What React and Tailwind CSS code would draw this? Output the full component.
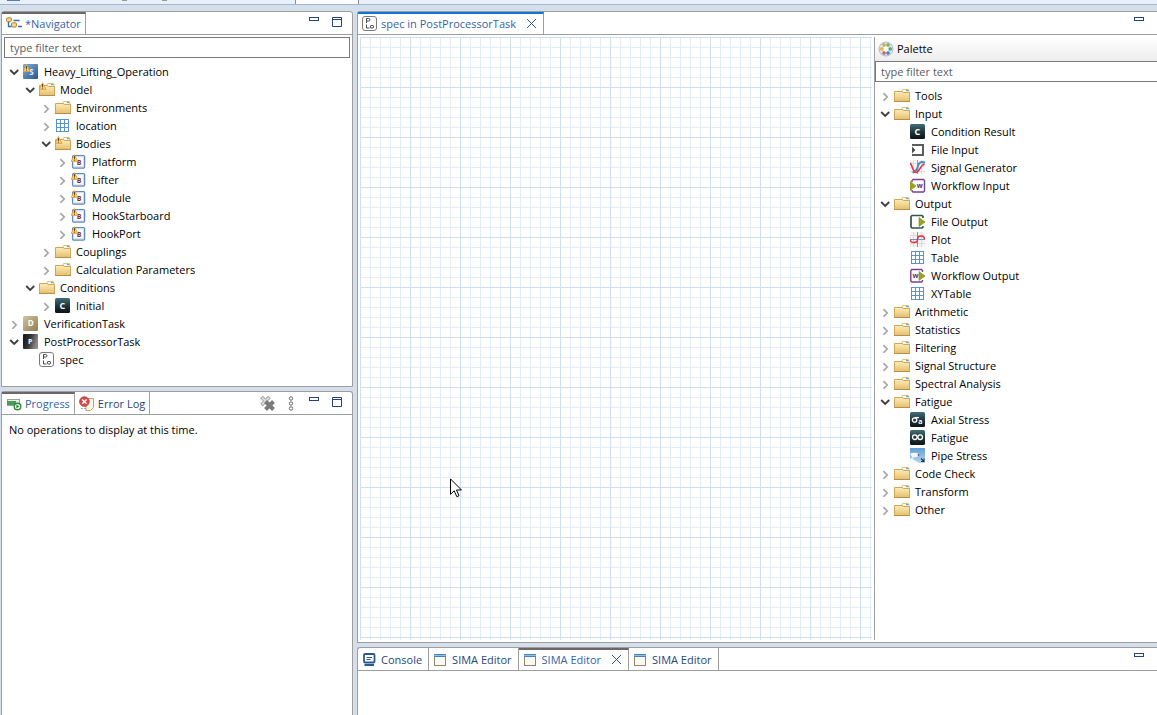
import React from "react";

const Svg = ({ children, w = 16, h = 16, className = "" }) => (
  <svg width={w} height={h} viewBox={`0 0 ${w} ${h}`} className={`shrink-0 ${className}`} aria-hidden="true">
    {children}
  </svg>
);

const Defs = () => (
  <svg width="0" height="0" className="absolute" aria-hidden="true">
    <defs>
      <linearGradient id="folder" x1="0" y1="0" x2="0" y2="1">
        <stop offset="0" stopColor="#fdeeba" />
        <stop offset="1" stopColor="#e6be6c" />
      </linearGradient>
      <linearGradient id="teal" x1="0" y1="0" x2="0" y2="1">
        <stop offset="0" stopColor="#3f7077" />
        <stop offset="0.6" stopColor="#1c2f33" />
        <stop offset="1" stopColor="#0d1414" />
      </linearGradient>
      <linearGradient id="blue" x1="0" y1="0" x2="1" y2="1">
        <stop offset="0" stopColor="#7fb0dc" />
        <stop offset="1" stopColor="#2a5590" />
      </linearGradient>
      <linearGradient id="tan" x1="0" y1="0" x2="1" y2="1">
        <stop offset="0" stopColor="#d3c69d" />
        <stop offset="1" stopColor="#8d7c50" />
      </linearGradient>
      <linearGradient id="dark" x1="0" y1="0" x2="1" y2="0.3">
        <stop offset="0" stopColor="#151515" />
        <stop offset="0.5" stopColor="#333" />
        <stop offset="1" stopColor="#8a8a8a" />
      </linearGradient>
      <linearGradient id="pipe" x1="0" y1="0" x2="0" y2="1">
        <stop offset="0" stopColor="#5f9fd6" />
        <stop offset="1" stopColor="#b8d6ee" />
      </linearGradient>
    </defs>
  </svg>
);

const Warn = () => (
  <g>
    <path d="M3.5 0.6 L7 7.4 H0.2 Z" fill="#fbcf6f" stroke="#dc9c3c" strokeWidth="0.8" strokeLinejoin="round" />
    <path d="M3.5 2.2v2.6M3.5 5.6v1" stroke="#5b3a10" strokeWidth="1" />
  </g>
);

const Glyph = ({ x = 8, y = 11.2, size = 9, fill = "#fff", children }) => (
  <text x={x} y={y} fontSize={size} fontWeight="700" fontFamily="Open Sans, sans-serif" textAnchor="middle" fill={fill}>
    {children}
  </text>
);

const Folder = ({ warn }) => (
  <Svg>
    <path d="M8 4 V2.5 Q8 1.5 9 1.5 H14 Q15 1.5 15 2.5 V5 H8Z" fill="#fff8df" stroke="#d9b469" strokeWidth="0.8" />
    <path d="M12 2.5h2.5" stroke="#3fb4e0" strokeWidth="1.2" />
    <path d="M0.5 3.5 H8 L9.5 4.5 H15.5 V13.5 H0.5 Z" fill="url(#folder)" stroke="#cfa65a" strokeWidth="1" />
    <path d="M0 13.5H16" stroke="#b58f4b" />
    {warn && <Warn />}
  </Svg>
);

const Grid = () => (
  <Svg>
    <rect x="1.5" y="1.5" width="12" height="12" fill="#fff" />
    <path d="M1.5 1v13M5.5 1v13M9.5 1v13M13.5 1v13M1 1.5h13M1 5.5h13M1 9.5h13M1 13.5h13" stroke="#5b93cd" />
  </Svg>
);

const Spec = () => (
  <Svg>
    <rect x="0.5" y="0.5" width="14" height="14" rx="2.5" fill="#fff" stroke="#7a7a7a" />
    <path d="M4.500 7V2.500h2.200a1.200 1.200 0 0 1 0 2.500H4.500M4.500 8.500v3.500h3" fill="none" stroke="#4c4c4c" />
    <rect x="8.5" y="9.5" width="3" height="2.500" rx="0.8" fill="#fff" stroke="#333" />
  </Svg>
);

const icons = {
  folder: <Folder />,
  folderWarn: <Folder warn />,
  grid: <Grid />,
  spec: <Spec />,
  sima: (
    <Svg>
      <rect width="15" height="15" rx="1" fill="url(#blue)" />
      <Glyph x={8.5} y={11.4} size={8} fill="#e6eef8">S</Glyph>
      <Warn />
    </Svg>
  ),
  body: (
    <Svg>
      <rect x="1.6" y="1.6" width="12" height="12.4" rx="1" fill="#fff" stroke="#6489b5" strokeWidth="1.3" />
      <rect x="2.8" y="2.8" width="9.6" height="10" fill="none" stroke="#cfe0f3" />
      <Glyph x={8} y={10.6} size={7} fill="#7d3223">B</Glyph>
      <Warn />
    </Svg>
  ),
  condition: (
    <Svg>
      <rect width="15" height="15" rx="1.5" fill="url(#teal)" />
      <Glyph x={7.3} y={10.8}>C</Glyph>
    </Svg>
  ),
  verification: (
    <Svg>
      <rect width="15" height="15" rx="1.5" fill="url(#tan)" />
      <Glyph x={7.6} y={10.4} size={8}>D</Glyph>
    </Svg>
  ),
  post: (
    <Svg>
      <rect width="15" height="15" rx="1" fill="url(#dark)" />
      <Glyph x={7.3} y={10.4} size={7}>P</Glyph>
    </Svg>
  ),
  fileInput: (
    <Svg>
      <path d="M3 4V3h10v10H3v-1" fill="none" stroke="#5c5c5c" strokeWidth="2" />
      <path d="M2 4.6L5.4 8 2 11.4Z" fill="#4c4c4c" />
    </Svg>
  ),
  fileOutput: (
    <Svg>
      <path d="M13 4V2.5L12 1.5H2L1 2.5v10.5l1 1h10l1-1V12" fill="#fff" stroke="#2e5558" strokeWidth="1.7" />
      <path d="M9 3.5L15 8 9 12.5Z" fill="#9aa51b" stroke="#7d8613" strokeWidth="0.6" />
    </Svg>
  ),
  workflowInput: (
    <Svg>
      <path d="M2 4V2.5l1-1h10.5l1 1V13l-1 1H3l-1-1v-1" fill="#fff" stroke="#7c3f8c" strokeWidth="1.4" />
      <path d="M0 3.5L6 8 0 12.5Z" fill="#9aa51b" stroke="#7d8613" strokeWidth="0.6" />
      <Glyph x={9.8} y={10.3} size={7} fill="#5d2c70">w</Glyph>
    </Svg>
  ),
  workflowOutput: (
    <Svg>
      <path d="M12.5 4V2.5l-1-1H1.8L0.8 2.5v10.5l1 1h9.7l1-1V12" fill="#fff" stroke="#7c3f8c" strokeWidth="1.4" />
      <path d="M9 3.5L15 8 9 12.5Z" fill="#9aa51b" stroke="#7d8613" strokeWidth="0.6" />
      <Glyph x={5.4} y={10.3} size={7} fill="#5d2c70">w</Glyph>
    </Svg>
  ),
  signal: (
    <Svg>
      <rect width="15" height="14" fill="#f6f6f6" />
      <path d="M3.5 0v14M11.5 0v14M0 3.5h15M0 11.5h15" stroke="#dedede" />
      <path d="M7.5 0v14" stroke="#9a9a9a" />
      <path d="M2.500 12.500C6 12 7 10 8 6S11 1.500 15 2.500" fill="none" stroke="#4a8bc9" strokeWidth="2" />
      <path d="M0 3C2 4 3 12.500 6 12.500S10 5.500 14.500 4" fill="none" stroke="#e0394a" strokeWidth="1.7" />
    </Svg>
  ),
  plot: (
    <Svg>
      <rect width="15" height="15" fill="#f4f4f4" />
      <path d="M3.5 0v15M11.5 0v15M0 3.5h15M0 11.5h15" stroke="#dadada" />
      <path d="M7.5 0v15M0 7.5h15" stroke="#6d97c2" />
      <path d="M0.500 7.500V9Q1 10.500 4 10.500 7 10.500 7.500 8.500V6.500Q8 4 11 4 14.500 4 14.500 7.500" fill="none" stroke="#e8323f" strokeWidth="1.4" />
    </Svg>
  ),
  axial: (
    <Svg>
      <rect width="15" height="15" rx="1.5" fill="url(#teal)" />
      <circle cx="4.6" cy="8" r="2.2" fill="none" stroke="#fff" strokeWidth="1.3" />
      <path d="M4.6 5.6H9" stroke="#fff" strokeWidth="1.3" />
      <Glyph x={10.3} y={11.5} size={7}>a</Glyph>
    </Svg>
  ),
  fatigue: (
    <Svg>
      <rect width="15" height="15" rx="1.5" fill="url(#teal)" />
      <circle cx="4.8" cy="7.2" r="2.3" fill="none" stroke="#fff" strokeWidth="1.3" />
      <circle cx="10.2" cy="7.2" r="2.3" fill="none" stroke="#fff" strokeWidth="1.3" />
    </Svg>
  ),
  pipe: (
    <Svg>
      <rect width="15" height="15" fill="url(#pipe)" />
      <path d="M0 5.5C4 4 9 4.5 10 7.5 7 9.5 4 9 0 10.5V15H9L3 11Z" fill="#f4f9fd" />
      <circle cx="8.6" cy="7" r="1" fill="#557" />
      <path d="M11 10.5l2.5 2.5M14 10.5v3h-3" fill="none" stroke="#22364d" strokeWidth="1.1" />
    </Svg>
  ),
};

const Arrow = ({ open }) =>
  open ? (
    <Svg w={10} h={10}>
      <path d="M1.2 3L5.2 7 9.2 3" fill="none" stroke="#404040" strokeWidth="1.9" />
    </Svg>
  ) : (
    <Svg w={10} h={10}>
      <path d="M3.400 2.200L7.200 6 3.400 9.800" fill="none" stroke="#a6a6a6" strokeWidth="1.7" />
    </Svg>
  );

const navigator = [
  { label: "Heavy_Lifting_Operation", icon: "sima", open: true, children: [
    { label: "Model", icon: "folderWarn", open: true, children: [
      { label: "Environments", icon: "folder", open: false },
      { label: "location", icon: "grid", open: false },
      { label: "Bodies", icon: "folderWarn", open: true, children: [
        { label: "Platform", icon: "body", open: false },
        { label: "Lifter", icon: "body", open: false },
        { label: "Module", icon: "body", open: false },
        { label: "HookStarboard", icon: "body", open: false },
        { label: "HookPort", icon: "body", open: false },
      ] },
      { label: "Couplings", icon: "folder", open: false },
      { label: "Calculation Parameters", icon: "folder", open: false },
    ] },
    { label: "Conditions", icon: "folder", open: true, children: [
      { label: "Initial", icon: "condition", open: false },
    ] },
  ] },
  { label: "VerificationTask", icon: "verification", open: false },
  { label: "PostProcessorTask", icon: "post", open: true, children: [{ label: "spec", icon: "spec" }] },
];

const palette = [
  { label: "Tools", icon: "folder", open: false },
  { label: "Input", icon: "folder", open: true, children: [
    { label: "Condition Result", icon: "condition" },
    { label: "File Input", icon: "fileInput" },
    { label: "Signal Generator", icon: "signal" },
    { label: "Workflow Input", icon: "workflowInput" },
  ] },
  { label: "Output", icon: "folder", open: true, children: [
    { label: "File Output", icon: "fileOutput" },
    { label: "Plot", icon: "plot" },
    { label: "Table", icon: "grid" },
    { label: "Workflow Output", icon: "workflowOutput" },
    { label: "XYTable", icon: "grid" },
  ] },
  { label: "Arithmetic", icon: "folder", open: false },
  { label: "Statistics", icon: "folder", open: false },
  { label: "Filtering", icon: "folder", open: false },
  { label: "Signal Structure", icon: "folder", open: false },
  { label: "Spectral Analysis", icon: "folder", open: false },
  { label: "Fatigue", icon: "folder", open: true, children: [
    { label: "Axial Stress", icon: "axial" },
    { label: "Fatigue", icon: "fatigue" },
    { label: "Pipe Stress", icon: "pipe" },
  ] },
  { label: "Code Check", icon: "folder", open: false },
  { label: "Transform", icon: "folder", open: false },
  { label: "Other", icon: "folder", open: false },
];

const Tree = ({ items, nested = false }) => (
  <ul role={nested ? "group" : "tree"} className={nested ? "pl-4" : ""}>
    {items.map((item) => (
      <li key={item.label} role="treeitem" aria-expanded={item.open}>
        <div className="flex h-[18px] items-center">
          {item.open === undefined ? (
            <span className="w-[10px] shrink-0" />
          ) : (
            <button type="button" aria-label={`Toggle ${item.label}`} className="shrink-0">
              <Arrow open={item.open} />
            </button>
          )}
          <span className="ml-1 mr-[5px]">{icons[item.icon]}</span>
          <span className="whitespace-nowrap">{item.label}</span>
        </div>
        {item.children && <Tree items={item.children} nested />}
      </li>
    ))}
  </ul>
);

const MinimizeButton = () => (
  <button type="button" aria-label="Minimize" className="mt-[2px] h-[4px] w-[10px] border border-[#264478] bg-white" />
);
const MaximizeButton = () => (
  <button type="button" aria-label="Maximize" className="mt-[2px]">
    <Svg w={10} h={10}>
      <path d="M0.5 0.5h9v9h-9zM0 2.5h10" fill="#fff" stroke="#264478" />
    </Svg>
  </button>
);

const CloseButton = () => (
  <button type="button" aria-label="Close" className="ml-[10px]">
    <Svg w={11} h={11}>
      <path d="M1 1l9 9M10 1l-9 9" stroke="#33558a" strokeWidth="1" />
    </Svg>
  </button>
);

const Tab = ({ icon, label, active, accent = "gray", closable, roomy }) => (
  <div
    role="tab"
    aria-selected={!!active}
    className={`flex h-full items-center gap-[3px] border-r border-[#9e9e9e] pl-1 ${closable || roomy ? "pr-[6px]" : "pr-1"} ${
      active
        ? `relative -mb-px h-[24px] border-t-2 bg-white pb-px ${accent === "blue" ? "border-t-[#0b76d6]" : "border-t-[#6d6767]"} text-[#3564a8]`
        : "pt-px text-[#27467e]"
    }`}
  >
    {icon}
    <span className="flex items-center whitespace-nowrap">
      {label}
      {closable && <CloseButton />}
    </span>
  </div>
);

const Header = ({ tabs, wide, children }) => (
  <div className="flex h-[23px] shrink-0 items-start border-b border-[#9e9e9e]">
    <div role="tablist" className="flex h-full">{tabs}</div>
    <div className={`ml-auto flex items-start gap-[13px] pt-[3px] ${wide ? "pr-[13px]" : "pr-[10px]"}`}>{children}</div>
  </div>
);

const NavIcon = () => (
  <Svg>
    <path d="M2.5 6v4.500H5.500M7.500 4.500h6M12 10.500h4" fill="none" stroke="#2f6fab" strokeWidth="1.4" />
    <rect x="0.6" y="1.8" width="4.8" height="3.800" rx="1" fill="#f8d98e" stroke="#b07d2e" />
    <rect x="5.600" y="6.800" width="4.8" height="4.200" rx="1" fill="#f8d98e" stroke="#b07d2e" />
  </Svg>
);

const ProgressIcon = () => (
  <Svg>
    <rect x="1.5" y="3.5" width="12" height="6" fill="#e4eee6" stroke="#8fa79a" />
    <rect x="1" y="5" width="9" height="4" fill="#4a9a52" />
    <circle cx="11.5" cy="10.5" r="3.300" fill="#e9f5e9" stroke="#2f8a3d" strokeWidth="1.400" />
    <path d="M10.4 8.600l2.900 1.900-2.900 1.900z" fill="#2f8a3d" />
  </Svg>
);

const ErrorIcon = () => (
  <Svg>
    <path d="M7 2.5h7.500v9l-3 3H7z" fill="#fdf9e4" stroke="#b9a869" />
    <path d="M3 12v2M6 12v2" stroke="#4c7ec0" strokeWidth="1.2" strokeDasharray="1 1" />
    <circle cx="5.4" cy="5.6" r="4.800" fill="#d94a4a" stroke="#b23232" strokeWidth="0.8" />
    <path d="M3.2 3.4l4.4 4.4M7.6 3.4L3.2 7.8" stroke="#fff" strokeWidth="1.4" />
  </Svg>
);

const ConsoleIcon = () => (
  <Svg>
    <rect x="2" y="2" width="10.5" height="8.500" rx="1" fill="#fff" stroke="#2c5796" strokeWidth="1.8" />
    <path d="M4.500 5.500h5.500M4.500 7.500h4" stroke="#2c5796" />
    <path d="M2.500 13h9.500" stroke="#2c5796" strokeWidth="2" />
  </Svg>
);

const WindowIcon = () => (
  <Svg w={14} h={14} className="mr-[2px]">
    <rect x="1.5" y="1.5" width="11" height="11" fill="#fbfaf4" stroke="#93855f" />
    <path d="M1 2.5h12" stroke="#3f86c4" strokeWidth="3" />
    <path d="M1 2.5h12" stroke="#8fc1e8" strokeWidth="1" />
  </Svg>
);

const PaletteIcon = () => (
  <Svg>
    <circle cx="8" cy="8" r="7" fill="#dfe9f6" stroke="#a9bad3" />
    <circle cx="8" cy="8" r="2.500" fill="#fff" />
    <circle cx="6" cy="4" r="1.1" fill="#fff" stroke="#e09a1c" strokeWidth="1.200" />
    <circle cx="10" cy="4" r="1.1" fill="#fff" stroke="#6aa824" strokeWidth="1.200" />
    <circle cx="3.8" cy="8" r="1.1" fill="#fff" stroke="#eda31c" strokeWidth="1.200" />
    <circle cx="12.2" cy="8" r="1.1" fill="#fff" stroke="#3a9a3a" strokeWidth="1.200" />
    <circle cx="6" cy="12" r="1.1" fill="#fff" stroke="#d04040" strokeWidth="1.200" />
    <circle cx="10" cy="12" r="1.1" fill="#fff" stroke="#2a6ab8" strokeWidth="1.200" />
  </Svg>
);

const RemoveAll = () => (
  <button type="button" aria-label="Remove all finished operations">
    <Svg w={16} h={16}>
      <path d="M2.500 2l8 8M10.500 2l-8 8" stroke="#9b9b9b" strokeWidth="3.600" />
      <path d="M3 2.500l7 7M10 2.500l-7 7" stroke="#dcdcdc" strokeWidth="2" />
      <path d="M6.500 6.500l8 8M14.500 6.500l-8 8" stroke="#7b7b7b" strokeWidth="4" />
    </Svg>
  </button>
);

const ViewMenu = () => (
  <button type="button" aria-label="View menu" className="mr-[2px]">
    <Svg w={6} h={16}>
      {[3.5, 8.5, 13.5].map((y) => (
        <circle key={y} cx="3" cy={y} r="1.7" fill="#fff" stroke="#666" />
      ))}
    </Svg>
  </button>
);

const Canvas = () => (
  <div className="relative min-w-0 flex-1">
    <svg className="block h-full w-full" aria-label="Workflow canvas">
      <defs>
        <pattern id="minor" width="10" height="10" patternUnits="userSpaceOnUse">
          <path d="M0.5 0V10M0 0.5H10" stroke="#e3edf8" />
        </pattern>
        <pattern id="major" width="50" height="50" patternUnits="userSpaceOnUse">
          <rect width="50" height="50" fill="url(#minor)" />
          <path d="M0.5 0V50M0 0.5H50" stroke="#cddff1" />
        </pattern>
      </defs>
      <rect width="100%" height="100%" fill="url(#major)" />
    </svg>
    <svg width="13" height="20" viewBox="0 0 13 20" className="absolute left-[90px] top-[441px]" aria-hidden="true">
      <path d="M0.500 0.900V16.300L4.200 12.800 6.800 18.700 9 17.700 6.500 12H11.500Z" fill="#fff" stroke="#000" strokeWidth="1" />
    </svg>
  </div>
);

const inputClass =
  "h-[21px] w-full border-[#7a7a7a] bg-white px-[5px] outline-none placeholder:text-[#5d5d5d]";

export default function App() {
  return (
    <div className="flex h-screen flex-col overflow-hidden bg-[#d4dfeb] font-['Open_Sans','Noto_Sans',sans-serif] text-[11px] leading-[16px] text-black">
      <Defs />
      <div className="flex h-[5px] shrink-0 border-b border-[#a3b6cd] bg-[#e8f0fa]">
        <div className="ml-[7px] h-px w-[13px] bg-[#5d76b8]" />
        <div className="ml-[102px] h-px w-[5px] bg-[#999]" />
        <div className="ml-[35px] h-px w-[5px] bg-[#999]" />
        <div className="ml-[128px] h-full w-[64px] border-x border-[#8d8d8d] bg-[#fafcff]" />
      </div>
      <div className="flex min-h-0 flex-1 gap-1 pl-px pt-[6px]">
        <div className="flex w-[352px] shrink-0 flex-col gap-1">
          <section className="flex h-[376px] shrink-0 flex-col rounded-t-[3px] border border-[#9e9e9e] bg-white">
            <Header tabs={<Tab active icon={<NavIcon />} label="*Navigator" />}>
              <MinimizeButton />
              <MaximizeButton />
            </Header>
            <div className="px-[2px] pt-[2px]">
              <input aria-label="Filter navigator" placeholder="type filter text" className={`border ${inputClass}`} />
            </div>
            <div className="pl-[7px] pt-[5px]">
              <Tree items={navigator} />
            </div>
          </section>
          <section className="flex min-h-0 flex-1 flex-col rounded-t-[3px] border border-b-0 border-[#9e9e9e] bg-white">
            <Header
              tabs={
                <>
                  <Tab active icon={<ProgressIcon />} label="Progress" />
                  <Tab icon={<ErrorIcon />} label="Error Log" />
                </>
              }
            >
              <RemoveAll />
              <ViewMenu />
              <MinimizeButton />
              <MaximizeButton />
            </Header>
            <p className="px-[7px] pt-[7px]">No operations to display at this time.</p>
          </section>
        </div>
        <div className="flex min-w-0 flex-1 flex-col gap-1">
          <section className="flex min-h-0 flex-1 flex-col rounded-tl-[3px] border border-r-0 border-[#9e9e9e] bg-white">
            <Header wide tabs={<Tab active accent="blue" closable icon={<Spec />} label="spec in PostProcessorTask" />}>
              <MinimizeButton />
            </Header>
            <div className="flex min-h-0 flex-1 pb-[2px] pl-[2px] pt-[2px]">
              <Canvas />
              <aside className="ml-[2px] flex w-[283px] shrink-0 flex-col border-l border-[#9e9e9e]">
                <div className="flex h-[24px] shrink-0 items-center gap-[3px] bg-linear-to-b from-white to-[#ededed] pl-[3px]">
                  <PaletteIcon />
                  <h2>Palette</h2>
                </div>
                <input aria-label="Filter palette" placeholder="type filter text" className={`border border-r-0 ${inputClass}`} />
                <div className="pl-[5px] pt-[5px]">
                  <Tree items={palette} />
                </div>
              </aside>
            </div>
          </section>
          <section className="flex h-[68px] shrink-0 flex-col rounded-tl-[3px] border border-b-0 border-r-0 border-[#9e9e9e] bg-white">
            <Header
              wide
              tabs={
                <>
                  <Tab roomy icon={<ConsoleIcon />} label="Console" />
                  <Tab roomy icon={<WindowIcon />} label="SIMA Editor" />
                  <Tab active closable icon={<WindowIcon />} label="SIMA Editor" />
                  <Tab roomy icon={<WindowIcon />} label="SIMA Editor" />
                </>
              }
            >
              <MinimizeButton />
            </Header>
          </section>
        </div>
      </div>
    </div>
  );
}
